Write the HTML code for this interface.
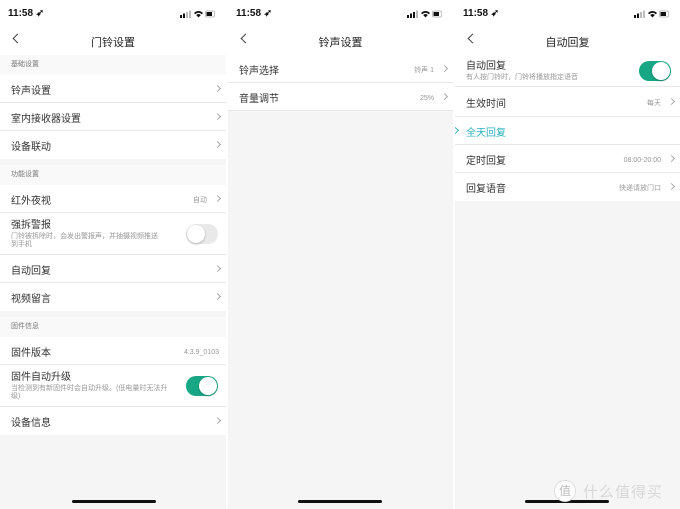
<!DOCTYPE html>
<html><head><meta charset="utf-8"><style>
*{margin:0;padding:0;box-sizing:border-box}
body{width:680px;height:509px;background:#fff;position:relative;overflow:hidden;font-family:"Liberation Sans","Noto Sans CJK SC",sans-serif;color:#333}
.p{position:absolute;top:0;height:509px;background:#f5f5f5;overflow:hidden}
.top{position:absolute;left:0;right:0;top:0;height:55px;background:#fff}
.time{position:absolute;left:8px;top:8px;font-size:10px;font-weight:bold;color:#111}
.st{position:absolute;right:10px;top:10px}
.st svg{display:block}
.title{position:absolute;left:0;right:0;top:34px;text-align:center;font-size:11px;color:#222}
.back{position:absolute;left:14px;top:35px;width:7px;height:7px;border-left:1.2px solid #444;border-bottom:1.2px solid #444;transform:rotate(45deg)}
.r{position:absolute;left:0;right:0;background:#fff;border-bottom:1px solid #e8e8e8}
.r .t{position:absolute;left:11px;font-size:10px;color:#333;line-height:14px}
.r .s{position:absolute;left:11px;font-size:7px;color:#999;line-height:8px}
.r .v{position:absolute;right:19px;font-size:7px;color:#999;line-height:10px}
.ch{position:absolute;right:6px;width:5px;height:5px;border-right:1px solid #aaa;border-top:1px solid #aaa;transform:rotate(45deg)}
.h{position:absolute;left:0;right:0;background:#f9f9f9;font-size:7px;color:#777;padding-left:11px}
.tg{position:absolute;width:32px;height:20px;border-radius:10px}
.tg.off{background:#e9e9e9}
.tg.on{background:#17a784}
.tg i{position:absolute;top:1px;width:18px;height:18px;border-radius:50%;background:#fff;box-shadow:0 1px 2px rgba(0,0,0,.25)}
.hb{position:absolute;top:500px;width:84px;height:3px;border-radius:2px;background:#111}
</style></head><body>

<!-- Panel 1 -->
<div class="p" style="left:0;width:226px">
<div class="top"><div class="time">11:58 ➶</div>
<div class="st"><svg width="36" height="8"><rect x="0" y="5" width="2" height="3" fill="#111"/><rect x="3" y="3.5" width="2" height="4.5" fill="#111"/><rect x="6" y="2" width="2" height="6" fill="#bbb"/><rect x="9" y="0.5" width="2" height="7.5" fill="#bbb"/><path d="M14 3 Q18.5 -1 23 3 L21.8 4.2 Q18.5 1.4 15.2 4.2Z M16.2 5 Q18.5 3 20.8 5 L18.5 7.5Z" fill="#111"/><rect x="25.5" y="1" width="9" height="6" rx="1.2" fill="none" stroke="#aaa" stroke-width=".7"/><rect x="26.5" y="2" width="5.5" height="4" fill="#111"/></svg></div>
<div class="back"></div><div class="title">门铃设置</div></div>
<div class="h" style="top:55px;height:20px;line-height:20px">基础设置</div>
<div class="r" style="top:75px;height:28px"><span class="t" style="top:10px">铃声设置</span><span class="ch" style="top:11px"></span></div>
<div class="r" style="top:103px;height:28px"><span class="t" style="top:10px">室内接收器设置</span><span class="ch" style="top:11px"></span></div>
<div class="r" style="top:131px;height:28px;border:0"><span class="t" style="top:10px">设备联动</span><span class="ch" style="top:11px"></span></div>
<div class="h" style="top:165px;height:20px;line-height:20px">功能设置</div>
<div class="r" style="top:185px;height:28px"><span class="t" style="top:10px">红外夜视</span><span class="v" style="top:11px">自动</span><span class="ch" style="top:11px"></span></div>
<div class="r" style="top:213px;height:42px"><span class="t" style="top:6px">强拆警报</span><span class="s" style="top:20px;width:150px">门铃被拆除时，会发出警报声，并抽摄视频推送到手机</span><div class="tg off" style="left:186px;top:11px"><i style="left:1px"></i></div></div>
<div class="r" style="top:255px;height:28px"><span class="t" style="top:10px">自动回复</span><span class="ch" style="top:11px"></span></div>
<div class="r" style="top:283px;height:28px;border:0"><span class="t" style="top:10px">视频留言</span><span class="ch" style="top:11px"></span></div>
<div class="h" style="top:317px;height:20px;line-height:20px">固件信息</div>
<div class="r" style="top:337px;height:28px"><span class="t" style="top:10px">固件版本</span><span class="v" style="top:11px;right:7px">4.3.9_0103</span></div>
<div class="r" style="top:365px;height:42px"><span class="t" style="top:6px">固件自动升级</span><span class="s" style="top:20px;width:158px">当检测到有新固件时会自动升级。(低电量时无法升级)</span><div class="tg on" style="left:186px;top:11px"><i style="left:13px"></i></div></div>
<div class="r" style="top:407px;height:28px;border:0"><span class="t" style="top:10px">设备信息</span><span class="ch" style="top:11px"></span></div>
<div class="hb" style="left:72px"></div>
</div>

<!-- Panel 2 -->
<div class="p" style="left:228px;width:225px">
<div class="top"><div class="time">11:58 ➶</div>
<div class="st"><svg width="36" height="8"><rect x="0" y="5" width="2" height="3" fill="#111"/><rect x="3" y="3.5" width="2" height="4.5" fill="#111"/><rect x="6" y="2" width="2" height="6" fill="#111"/><rect x="9" y="0.5" width="2" height="7.5" fill="#bbb"/><path d="M14 3 Q18.5 -1 23 3 L21.8 4.2 Q18.5 1.4 15.2 4.2Z M16.2 5 Q18.5 3 20.8 5 L18.5 7.5Z" fill="#111"/><rect x="25.5" y="1" width="9" height="6" rx="1.2" fill="none" stroke="#aaa" stroke-width=".7"/><rect x="26.5" y="2" width="5.5" height="4" fill="#111"/></svg></div>
<div class="back"></div><div class="title">铃声设置</div></div>
<div class="r" style="top:55px;height:28px"><span class="t" style="top:10px">铃声选择</span><span class="v" style="top:11px">铃声 1</span><span class="ch" style="top:11px"></span></div>
<div class="r" style="top:83px;height:28px"><span class="t" style="top:10px">音量调节</span><span class="v" style="top:11px">25%</span><span class="ch" style="top:11px"></span></div>
<div class="hb" style="left:70px"></div>
</div>

<!-- Panel 3 -->
<div class="p" style="left:455px;width:225px">
<div class="top"><div class="time">11:58 ➶</div>
<div class="st"><svg width="36" height="8"><rect x="0" y="5" width="2" height="3" fill="#111"/><rect x="3" y="3.5" width="2" height="4.5" fill="#111"/><rect x="6" y="2" width="2" height="6" fill="#bbb"/><rect x="9" y="0.5" width="2" height="7.5" fill="#bbb"/><path d="M14 3 Q18.5 -1 23 3 L21.8 4.2 Q18.5 1.4 15.2 4.2Z M16.2 5 Q18.5 3 20.8 5 L18.5 7.5Z" fill="#111"/><rect x="25.5" y="1" width="9" height="6" rx="1.2" fill="none" stroke="#aaa" stroke-width=".7"/><rect x="26.5" y="2" width="5.5" height="4" fill="#111"/></svg></div>
<div class="back"></div><div class="title">自动回复</div></div>
<div class="r" style="top:55px;height:32px"><span class="t" style="top:5px">自动回复</span><span class="s" style="top:19px">有人按门铃时，门铃将播放指定语音</span><div class="tg on" style="left:184px;top:6px"><i style="left:13px"></i></div></div>
<div class="r" style="top:87px;height:30px"><span class="t" style="top:11px">生效时间</span><span class="v" style="top:12px">每天</span><span class="ch" style="top:12px"></span></div>
<div class="r" style="top:117px;height:28px"><span class="ch" style="top:11px;left:-2px;right:auto;border-color:#3bb6c4"></span><span class="t" style="top:10px;color:#2bb0c0">全天回复</span></div>
<div class="r" style="top:145px;height:28px"><span class="t" style="top:10px">定时回复</span><span class="v" style="top:11px">08:00-20:00</span><span class="ch" style="top:11px"></span></div>
<div class="r" style="top:173px;height:28px;border:0"><span class="t" style="top:10px">回复语音</span><span class="v" style="top:11px">快递请放门口</span><span class="ch" style="top:11px"></span></div>
<div class="hb" style="left:70px"></div>
<div style="position:absolute;left:99px;top:480px;width:22px;height:22px;border-radius:50%;background:#fff;border:1px solid #ddd;font-size:12px;color:#bbb;text-align:center;line-height:20px">值</div>
<div style="position:absolute;left:128px;top:481px;font-size:15px;color:#d8d8d8;letter-spacing:1px">什么值得买</div>
</div>
</body></html>
